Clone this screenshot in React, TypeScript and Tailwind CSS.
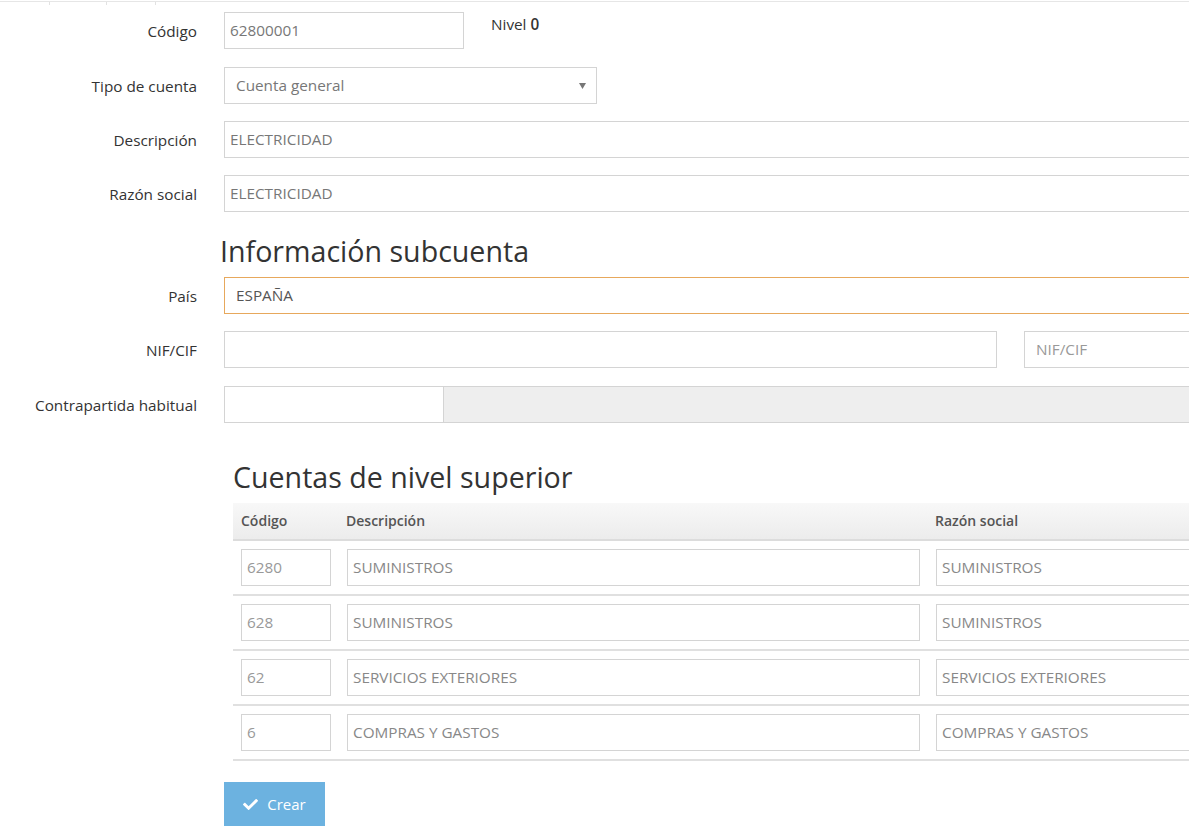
import React from "react";
import { FaCheck } from "react-icons/fa";

const field =
  "h-[37px] border border-[#d4d4d4] bg-white flex items-center text-[#777] text-[15.3px]";

function Row({
  label,
  className = "",
  children,
}: {
  label: string;
  className?: string;
  children: React.ReactNode;
}) {
  return (
    <div className={`flex items-start ${className}`}>
      <div className="w-[197px] shrink-0 h-[37px] flex items-center justify-end pt-[1px] text-[#333]">
        {label}
      </div>
      <div className="ml-[27px] flex-1 flex items-start">{children}</div>
    </div>
  );
}

const rows = [
  { code: "6280", desc: "SUMINISTROS", razon: "SUMINISTROS" },
  { code: "628", desc: "SUMINISTROS", razon: "SUMINISTROS" },
  { code: "62", desc: "SERVICIOS EXTERIORES", razon: "SERVICIOS EXTERIORES" },
  { code: "6", desc: "COMPRAS Y GASTOS", razon: "COMPRAS Y GASTOS" },
];

export default function App() {
  return (
    <div className="w-[1189px] h-[834px] overflow-hidden bg-white font-['Open_Sans',sans-serif] text-[15.3px] leading-[20px]">
      <div className="w-[1240px]">
        {/* tab strip edge */}
        <div className="flex h-[4px] mt-[1px] border-t border-[#e6e6e6]">
          <div className="w-[50px] border-r border-[#e2e2e2]" />
          <div className="w-[57px] border-r border-[#e2e2e2]" />
          <div className="w-[49px] border-r border-[#e2e2e2]" />
        </div>

        <Row label="Código" className="mt-[7px]">
          <div className={`${field} w-[240px] pl-[5px] pb-[1px]`}>62800001</div>
          <div className="ml-[27px] mt-[2px] text-[#333]">
            Nivel <span className="font-semibold">0</span>
          </div>
        </Row>

        <Row label="Tipo de cuenta" className="mt-[18px]">
          <div className={`${field} w-[373px] pl-[11px] pr-[10px] pb-[1px] justify-between`}>
            <span>Cuenta general</span>
            <svg width="7" height="6" viewBox="0 0 7 6" className="mt-[1px]">
              <path d="M0 0h7L3.5 6z" fill="#777" />
            </svg>
          </div>
        </Row>

        <Row label="Descripción" className="mt-[17px]">
          <div className={`${field} flex-1 pl-[5px] pb-[1px]`}>ELECTRICIDAD</div>
        </Row>

        <Row label="Razón social" className="mt-[17px]">
          <div className={`${field} flex-1 pl-[5px] pb-[1px]`}>ELECTRICIDAD</div>
        </Row>

        <h2 className="ml-[220px] mt-[23px] text-[28.6px] leading-[31px] text-[#333] font-normal">
          Información subcuenta
        </h2>

        <Row label="País" className="mt-[11px]">
          <div className="h-[37px] flex-1 border border-[#e7a85c] bg-white flex items-center pl-[11px] pb-[1px] text-[#555]">
            ESPAÑA
          </div>
        </Row>

        <Row label="NIF/CIF" className="mt-[17px]">
          <div className={`${field} w-[773px]`} />
          <div className={`${field} flex-1 ml-[27px] pl-[11px] pb-[1px] text-[#999]`}>NIF/CIF</div>
        </Row>

        <Row label="Contrapartida habitual" className="mt-[18px]">
          <div className={`${field} w-[220px]`} />
          <div className="h-[37px] flex-1 border border-l-0 border-[#d4d4d4] bg-[#eeeeee]" />
        </Row>

        <h2 className="ml-[233px] mt-[38px] text-[28.6px] leading-[31px] text-[#333] font-normal">
          Cuentas de nivel superior
        </h2>

        {/* parent accounts table */}
        <div className="ml-[233px] mt-[11px]">
          <div className="flex h-[38px] items-center border-b-2 border-[#dcdcdc] bg-gradient-to-b from-[#f8f8f8] to-[#ececec] font-semibold text-[14px] text-[#555]">
            <div className="w-[106px] shrink-0 px-[8px]">Código</div>
            <div className="w-[589px] shrink-0 px-[7px]">Descripción</div>
            <div className="flex-1 px-[7px]">Razón social</div>
          </div>
          {rows.map((r) => (
            <div key={r.code} className="flex py-[8px] border-b-2 border-[#e0e0e0]">
              <div className="w-[106px] shrink-0 px-[8px]">
                <div className={`${field} bg-[#f2f2f2] pl-[5px] pb-[1px] text-[#999]`}>{r.code}</div>
              </div>
              <div className="w-[589px] shrink-0 px-[8px]">
                <div className={`${field} pl-[5px] pb-[1px] text-[#888]`}>{r.desc}</div>
              </div>
              <div className="flex-1 px-[8px]">
                <div className={`${field} pl-[5px] pb-[1px] text-[#888]`}>{r.razon}</div>
              </div>
            </div>
          ))}
        </div>

        <button className="ml-[224px] mt-[21px] w-[101px] h-[44px] bg-[#6cb2e0] text-white flex items-center justify-center gap-[9px] text-[15px]">
          <FaCheck className="w-[15px] h-[15px]" />
          <span>Crear</span>
        </button>
      </div>
    </div>
  );
}
